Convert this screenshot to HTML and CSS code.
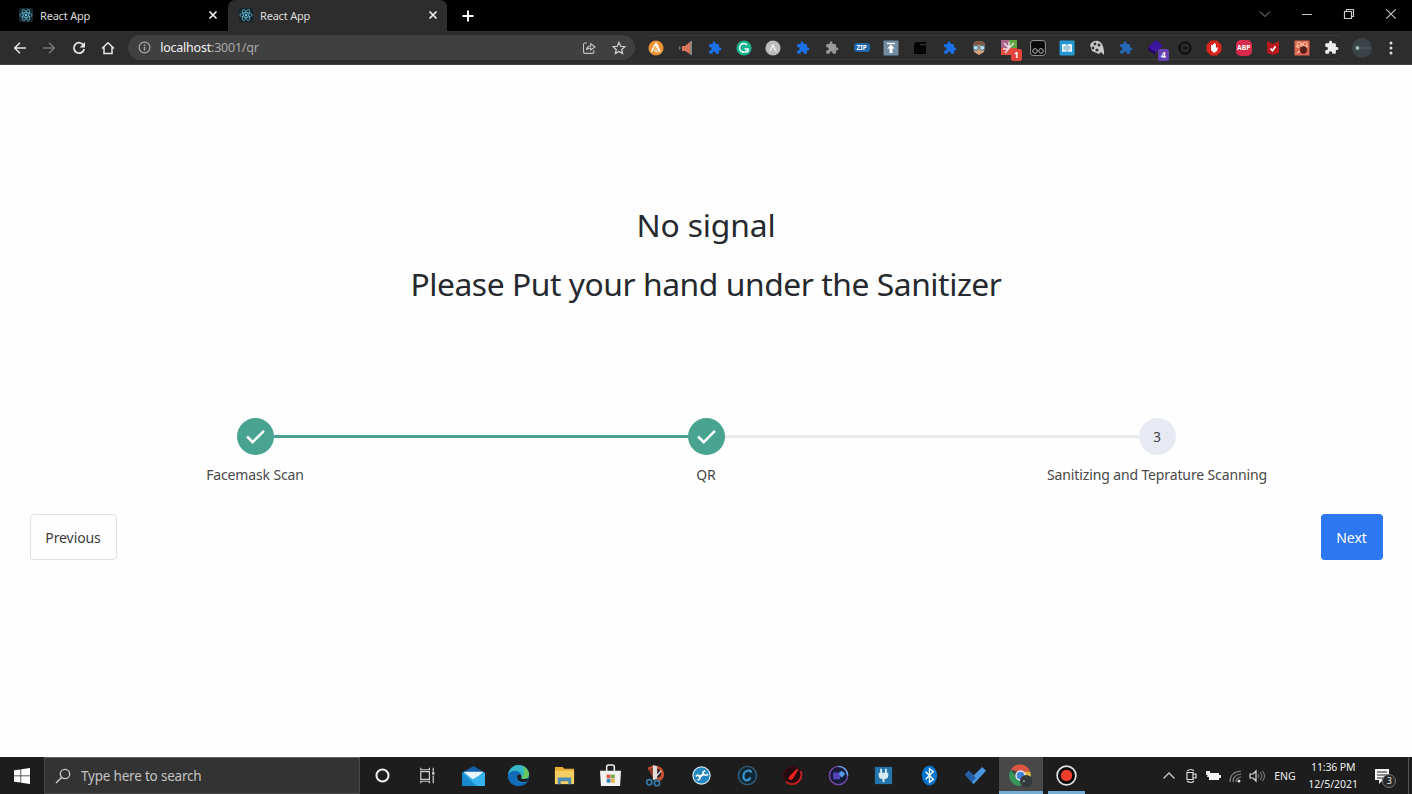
FILE: index.html
```html
<!DOCTYPE html>
<html lang="en">
<head>
<meta charset="utf-8">
<title>React App</title>
<link rel="stylesheet" href="styles.css">
</head>
<body>
<svg class="defs" width="0" height="0">
  <symbol id="react" viewBox="0 0 16 16"><rect width="16" height="16" rx="2" fill="#17262e"/><g fill="none" stroke="#56a5bd" stroke-width="1"><ellipse cx="8" cy="8" rx="7" ry="2.7"/><ellipse cx="8" cy="8" rx="7" ry="2.7" transform="rotate(60 8 8)"/><ellipse cx="8" cy="8" rx="7" ry="2.7" transform="rotate(120 8 8)"/></g><circle cx="8" cy="8" r="1.4" fill="#63bbd5"/></symbol>
  <symbol id="puzzle" viewBox="0 0 24 24"><path d="M20.5 11H19V7c0-1.1-.9-2-2-2h-4V3.5C13 2.12 11.88 1 10.5 1S8 2.12 8 3.5V5H4c-1.1 0-1.99.9-1.99 2v3.8H3.5c1.49 0 2.7 1.21 2.7 2.7s-1.21 2.7-2.7 2.7H2V20c0 1.1.9 2 2 2h3.8v-1.5c0-1.49 1.21-2.7 2.7-2.7s2.7 1.21 2.7 2.7V22H17c1.1 0 2-.9 2-2v-4h1.5c1.38 0 2.5-1.12 2.5-2.5S21.88 11 20.5 11z"/></symbol>
  <symbol id="close" viewBox="0 0 10 10"><path d="M1.5 1.5l7 7m0-7l-7 7" fill="none" stroke="currentColor" stroke-width="1.7"/></symbol>
</svg>

<header class="tabstrip">
  <div class="tab"><svg class="favicon"><use href="#react"/></svg><span class="tab-title">React App</span><svg class="tab-close"><use href="#close"/></svg></div>
  <div class="tab tab-active"><svg class="favicon"><use href="#react"/></svg><span class="tab-title">React App</span><svg class="tab-close"><use href="#close"/></svg></div>
  <svg class="new-tab" viewBox="0 0 12 12"><path d="M6 .5v11M.5 6h11" stroke="#fff" stroke-width="2"/></svg>
  <div class="window-controls">
    <svg viewBox="0 0 12 12"><path d="M1 3.5l5 5 5-5" fill="none" stroke="#999"/></svg>
    <svg viewBox="0 0 12 12"><path d="M1 6.5h10" stroke="#ccc"/></svg>
    <svg viewBox="0 0 12 12"><path d="M1.5 3.5h7v7h-7zM3.5 3V1.5h7v7H9" fill="none" stroke="#ccc" stroke-width="1.2"/></svg>
    <svg viewBox="0 0 12 12"><path d="M1.3 1.3l9.4 9.4m0-9.4l-9.4 9.4" stroke="#ccc" stroke-width="1.1"/></svg>
  </div>
</header>

<nav class="toolbar">
  <div class="nav-buttons">
    <svg viewBox="0 0 14 14"><path d="M13 7H2m5-5.3L1.7 7 7 12.3" fill="none" stroke="#e4e4e4" stroke-width="1.6"/></svg>
    <svg viewBox="0 0 14 14"><path d="M1 7h11M7 1.7L12.300 7 7 12.3" fill="none" stroke="#777" stroke-width="1.5"/></svg>
    <svg viewBox="0 0 14 14"><path d="M11.600 4.300A5.200 5.200 0 1 0 12.200 8" fill="none" stroke="#e8e8e8" stroke-width="1.7"/><path d="M13 1v5.400H7.600z" fill="#e8e8e8"/></svg>
    <svg viewBox="0 0 14 14"><path d="M1 7.500L7 1.800l6 5.700M3 6.200v6.300h8V6.200" fill="none" stroke="#e8e8e8" stroke-width="1.5"/></svg>
  </div>
  <div class="address">
    <svg class="info" viewBox="0 0 13 13"><circle cx="6.500" cy="6.500" r="5.400" fill="none" stroke="#aaa" stroke-width="1.200"/><path d="M6.500 5.800v3.700M6.500 3.300v1.400" stroke="#aaa" stroke-width="1.400"/></svg>
    <span class="url"><b>localhost</b>:3001/qr</span>
    <svg class="share" viewBox="0 0 14 14"><path d="M5 2H3.200Q1.500 2 1.500 3.700v7Q1.500 12.400 3.200 12.400h7q1.700 0 1.700-1.700V9.300M4.500 9c.3-3 2-4 4.200-4V2.700L13 6 8.700 9V7C6.800 7 5.500 7.500 4.500 9z" fill="none" stroke="#c4c4c4" stroke-width="1.100"/></svg>
    <svg class="star" viewBox="0 0 14 14"><path d="M7 1.400l1.700 3.900 4.200.4-3.200 2.800.9 4.100L7 10.400l-3.600 2.200.9-4.100L1.100 5.700l4.200-.4z" fill="none" stroke="#d6d6d6" stroke-width="1.200"/></svg>
  </div>
  <div class="extensions">
    <i><svg viewBox="0 0 16 16"><circle cx="8" cy="8" r="7.600" fill="#ed9135"/><path d="M2.500 11.500L7 3q1-1.500 2 0l4 8.500-2 .5-4-6-2.500 6z" fill="#fff1dd"/><path d="M7 7l4 6-5-1z" fill="#f7cf9b"/></svg></i>
    <i><svg viewBox="0 0 16 16"><path d="M13 2v12l-5-3H5V6h3z" fill="#dc7659"/><path d="M14 1v14" stroke="#e7d8d0"/><path d="M2 6l2 2-2 2z" fill="#648b9b"/></svg></i>
    <i><svg class="blue"><use href="#puzzle"/></svg></i>
    <i><svg viewBox="0 0 16 16"><circle cx="8" cy="8" r="7.600" fill="#1bb18d"/><path d="M11 5a4.300 4.300 0 1 0 1 4H8.500M10 12l2-.5V9" fill="none" stroke="#e8fff8" stroke-width="1.500"/></svg></i>
    <i><svg viewBox="0 0 16 16"><circle cx="8" cy="8" r="7.600" fill="#bbb"/><path d="M4 12l3.500-8h1L12 12l-2-1-2-4-2 4z" fill="#eee"/></svg></i>
    <i><svg class="blue"><use href="#puzzle"/></svg></i>
    <i><svg class="gray"><use href="#puzzle"/></svg></i>
    <i><span class="zip">ZIP</span></i>
    <i><svg viewBox="0 0 16 16"><rect x=".5" y=".5" width="15" height="15" rx="1" fill="#718da4"/><path d="M4 3.500h8" stroke="#fff" stroke-width="1.300"/><path d="M8 4.500l3.800 4H9.500V13h-3V8.500H4.200z" fill="#fff"/></svg></i>
    <i><svg viewBox="0 0 16 16"><path d="M2 4l2-2h10v12H2z" fill="#030303"/><path d="M8 4l3 1 3-1" stroke="#444" fill="none"/></svg></i>
    <i><svg class="blue"><use href="#puzzle"/></svg></i>
    <i><svg viewBox="0 0 16 16"><path d="M2 6q0-5 6-5t6 5l-1 6-5 3-5-3z" fill="#d6a47e"/><path d="M2 6q0-5 6-5t6 5q-6-2-12 0z" fill="#815640"/><g fill="#b6e1f3" stroke="#476d87"><circle cx="4.800" cy="7.800" r="2.500"/><circle cx="11.200" cy="7.800" r="2.500"/></g></svg></i>
    <i><svg viewBox="0 0 16 16"><path fill="#aa638a" d="M0 0h8v8H0z"/><path fill="#5da53d" d="M8 0h8v8H8z"/><path fill="#e24e42" d="M0 8h16v7H0z"/><path d="M8 2v6M3 3l5 5M2 9h6M8 8l5-5M8 8l-4 5" stroke="#ecdfe7" stroke-width="1.500"/></svg><em class="badge red">1</em></i>
    <i><svg viewBox="0 0 16 16"><rect x=".6" y=".6" width="14.800" height="14.800" rx="2.500" fill="#080808" stroke="#999"/><g fill="none" stroke="#bbb"><circle cx="5" cy="11" r="2.300"/><circle cx="11" cy="11" r="2.300"/></g></svg></i>
    <i><svg viewBox="0 0 16 16"><rect x=".5" y=".5" width="15" height="15" rx="1" fill="#2799d2"/><path d="M3 4.500q3-1 5 .5 2-1.500 5-.5V12q-3-1-5 0-2-1-5 0z" fill="#f0faff"/><path d="M8 5v7M4.500 7H7M9 7h2.500M4.500 9H7M9 9h2.500" stroke="#347ca5" stroke-width=".8"/></svg></i>
    <i><svg viewBox="0 0 16 16"><path d="M1 5q3-5 8-4t6 10v4l-3-3-2 2-7-3z" fill="#c9c9c9"/><g fill="#333"><circle cx="6" cy="4" r="1.400"/><circle cx="10" cy="5" r="1.500"/><circle cx="4" cy="8" r="1.400"/><circle cx="8" cy="10" r="1.600"/></g></svg></i>
    <i><svg class="blue dim"><use href="#puzzle"/></svg></i>
    <i><svg viewBox="0 0 16 16"><path d="M0 7l8-7 7 6-8 7z" fill="#3d16a0"/><path d="M0 7v3l7 5V12z" fill="#230765"/></svg><em class="badge violet">4</em></i>
    <i><svg viewBox="0 0 16 16"><circle cx="8" cy="8" r="5.700" fill="#292929" stroke="#080808" stroke-width="1.600"/><path d="M5.500 8h5" stroke="#111" stroke-width="1.500"/></svg></i>
    <i><svg viewBox="0 0 16 16"><path d="M5 .5h6L15.500 5v6L11 15.500H5L.5 11V5z" fill="#dc241d"/><path d="M5 5v5l3 3 3-2 1-4-2 1V4H9V3H8v1H7v1z" fill="#fff"/></svg></i>
    <i><span class="abp">ABP</span></i>
    <i><svg viewBox="0 0 16 16"><path d="M2 1l6 3 6-3v12l-6 2-6-2z" fill="#b9181d"/><path d="M5.500 8.500l2 2.200 3-4.500" stroke="#fff" stroke-width="1.700" fill="none"/></svg></i>
    <i><svg viewBox="0 0 16 16"><rect x=".5" y=".5" width="15" height="15" fill="#de6650"/><path d="M2 6l3 2M14 6l-3 2M3 13l3-2M8 3v4" stroke="#ffcaac" stroke-width="1.300"/><circle cx="5" cy="4" r="2" fill="none" stroke="#ffcaac"/><circle cx="11" cy="4" r="2" fill="none" stroke="#ffcaac"/><ellipse cx="9.500" cy="10" rx="3.500" ry="3.700" fill="#552019"/></svg></i>
    <i><svg class="white"><use href="#puzzle"/></svg></i>
  </div>
  <svg class="profile" viewBox="0 0 22 22"><circle cx="11" cy="11" r="10" fill="#3c4347"/><circle cx="6.500" cy="11" r="2" fill="#93bdb2"/><path d="M10 11h9" stroke="#596165"/></svg>
  <svg class="more" viewBox="0 0 4 14"><g fill="#ddd"><circle cx="2" cy="2" r="1.500"/><circle cx="2" cy="7" r="1.500"/><circle cx="2" cy="12" r="1.500"/></g></svg>
</nav>

<main class="page">
  <h1 class="signal">No signal</h1>
  <h1 class="instruction">Please Put your hand under the Sanitizer</h1>
  <div class="stepper">
    <div class="step done"><span class="dot"><svg viewBox="0 0 22 16"><path d="M2 8l6 6L20 2" fill="none" stroke="#fff" stroke-width="2.700"/></svg></span><span class="label">Facemask Scan</span></div>
    <div class="step done-last"><span class="dot"><svg viewBox="0 0 22 16"><path d="M2 8l6 6L20 2" fill="none" stroke="#fff" stroke-width="2.700"/></svg></span><span class="label">QR</span></div>
    <div class="step pending"><span class="dot">3</span><span class="label">Sanitizing and Teprature Scanning</span></div>
  </div>
  <div class="actions"><button class="btn previous">Previous</button><button class="btn next">Next</button></div>
</main>

<footer class="taskbar">
  <div class="start"><svg viewBox="0 0 16 16"><path d="M0 2.300L6.500 1.400V7.600H0zM7.200 1.300L16 0v7.600H7.200zM0 8.300h6.500v6.300L0 13.700zM7.200 8.300H16V16l-8.800-1.300z" fill="#fff"/></svg></div>
  <div class="search"><svg viewBox="0 0 16 16"><circle cx="10" cy="6" r="4.700" fill="none" stroke="#ccc" stroke-width="1.300"/><path d="M6.600 9.400L1 15" stroke="#ccc" stroke-width="1.400"/></svg><span>Type here to search</span></div>
  <div class="apps">
    <i><svg viewBox="0 0 24 24"><circle cx="12" cy="12" r="6.300" fill="none" stroke="#eee" stroke-width="2.100"/></svg></i>
    <i><svg viewBox="0 0 24 24"><path d="M5 8h9v8H5zM5 4v2h9V4M5 20v-2h9v2M18 4v4M18 12v8" fill="none" stroke="#ccc" stroke-width="1.300"/><path d="M16.800 8.500h2.500v2.500h-2.500z" fill="#ddd"/></svg></i>
    <i><svg viewBox="0 0 24 24"><path d="M0 9l12-7 12 7v4H0z" fill="#1260a8"/><path d="M0 9h24v14H0z" fill="#2ba3e2"/><path d="M1.500 8h21L12 17z" fill="#e8f7ff"/><path d="M0 9l15 14H0z" fill="#1989cf"/><path d="M24 9L9 17l7 6h8z" fill="#36b3ec"/></svg></i>
    <i><svg viewBox="0 0 24 24"><circle cx="12" cy="12" r="11" fill="#1683cb"/><path d="M1 11C3 3 8 1 12 1c7 0 11 5 11 10 0 4-4 5-8 4 1-4-1-8-6-8-3 0-6 1-8 4z" fill="#35b6c3"/><path d="M16 2c5 2 7 6 7 9 0 4-4 5-8 4 3-4 4-8 1-13z" fill="#65c95d"/><path d="M1 12c2-5 10-7 13-1-5-1-6 4-3 7 3 3 7 2 11 0-5 8-20 7-21-6z" fill="#126bb7"/><path d="M11 11.500c1-1 4-1 4 1 0 1-1 2 0 2.700 2 1 5 .6 7-.7 0 1-.4 2.500-1 3.500-5 2.500-13-.5-10-6.500z" fill="#1d1d1d"/></svg></i>
    <i><svg viewBox="0 0 24 24"><path d="M2 3h8l2 2h10v15H2z" fill="#e7ae35"/><path d="M2 7h20v14H2z" fill="#f4cd63"/><path d="M5 21v-7h14v7h-3v-3H8v3z" fill="#4c8db5"/></svg></i>
    <i><svg viewBox="0 0 24 24"><path d="M8 8V3Q8 1 10 1h4q2 0 2 2v5" fill="none" stroke="#eee" stroke-width="1.600"/><path d="M1 7h22l-1 16H2z" fill="#f2f2f2"/><path fill="#db5840" d="M8 11h4v4H8z"/><path fill="#79a94a" d="M12.500 11h4v4h-4z"/><path fill="#3987bd" d="M8 15.500h4v4H8z"/><path fill="#e7b342" d="M12.500 15.500h4v4h-4z"/></svg></i>
    <i><svg viewBox="0 0 24 24"><path d="M4 4Q12-1 18 4c6 6 2 14-4 14l-1-3q7-2 4-8-4-5-12 0z" fill="#c74e2c"/><path d="M5 6q5-4 9 0v8H9z" fill="#8c3923"/><path d="M10 2l3 1v12l-3 1zM18 7l-8 9" fill="#ddd" stroke="#ddd" stroke-width="1.400"/><g fill="none" stroke="#347baa" stroke-width="1.800"><circle cx="5.500" cy="19" r="2.700"/><circle cx="13.500" cy="20" r="2.700"/></g></svg></i>
    <i><svg viewBox="0 0 24 24"><circle cx="12" cy="12" r="9" fill="#2386c1" stroke="#dceef6" stroke-width="1.200"/><path d="M9 14l6-4" stroke="#fff" stroke-width="2.200"/><path d="M6 13l2-1.500 2.300 1.200.2 2.300L8 17M16 7l-2.500 1.500.5 2.500 2.500 1L19 10.500" fill="none" stroke="#fff" stroke-width="1.600"/></svg></i>
    <i><svg viewBox="0 0 24 24"><circle cx="12" cy="12" r="9.500" fill="#102735" stroke="#365e7b" stroke-width="1.500"/><path d="M16 9q-1-3-4-2c-5 1-6 10-1 10q3 0 4-3" fill="none" stroke="#3d91ca" stroke-width="2.300"/></svg></i>
    <i><svg viewBox="0 0 24 24"><circle cx="12" cy="12" r="9.500" fill="#240b0d" stroke="#3f1215"/><path d="M5 18.500q7 5 13 0 5-5 2.500-11" fill="none" stroke="#c62026" stroke-width="2"/><path d="M16.500 5l1.500 1-5 8.500q-2 3-4 2t0-4z" fill="#ed211f"/></svg></i>
    <i><svg viewBox="0 0 24 24"><circle cx="12" cy="12" r="9.500" fill="#171a38" stroke="#744cae" stroke-width="1.500"/><path d="M12 2.500a9.500 9.500 0 0 1 9.500 9.500" fill="none" stroke="#6aa6e0" stroke-width="1.500"/><path d="M6.500 9h7v7h-7z" fill="#4b50c5"/><path d="M13 8h2V6.500l4 4-4 4V13h-2z" fill="#559de8"/><path d="M6.500 12.500h7M10 9v7" stroke="#6732a4"/></svg></i>
    <i><svg viewBox="0 0 24 24"><path d="M3 3h18v18H3z" fill="#2575ad"/><path d="M7 9h10v3q0 4-5 4t-5-4z" fill="#d3eaf4"/><path d="M9.500 5v5M14.500 5v5M12 15v4" stroke="#d3eaf4" stroke-width="2"/></svg></i>
    <i><svg viewBox="0 0 24 24"><ellipse cx="12" cy="12" rx="8" ry="10.500" fill="#0874cc"/><path d="M8 8l8 8-4 3V5l4 3-8 8" fill="none" stroke="#fff" stroke-width="1.400"/></svg></i>
    <i><svg viewBox="0 0 24 24"><path d="M1 11l4-4 5 5 9-9 4 4-13 14z" fill="#4795dd"/><path d="M1 11l4-4 7.500 7.500L8 19z" fill="#235ca5"/></svg></i>
    <i class="chrome-app"><svg viewBox="0 0 24 24"><path d="M2 6a11 11 0 0 1 20 2H12z" fill="#dd5747"/><path d="M2 6A11 11 0 0 0 12 23l4-10H7z" fill="#36955a"/><path d="M12 8h10a11 11 0 0 1-9 15z" fill="#e3b941"/><circle cx="12" cy="12" r="4.700" fill="#4183d7" stroke="#e4e8ec" stroke-width="1.500"/><circle cx="18" cy="18" r="6.500" fill="#34393c"/><circle cx="15.500" cy="18" r="1.200" fill="#78938d"/></svg></i>
    <i class="record-app"><svg viewBox="0 0 24 24"><circle cx="12" cy="12" r="9.800" fill="#080808" stroke="#e1e1e1" stroke-width="1.800"/><circle cx="12" cy="12" r="6" fill="#ef3b2c"/></svg></i>
  </div>
  <div class="tray">
    <i><svg viewBox="0 0 16 16"><path d="M2.500 10.500L8 5l5.500 5.500" fill="none" stroke="#ccc" stroke-width="1.300"/></svg></i>
    <i><svg viewBox="0 0 16 16"><path d="M4 4.500h6v7H4zM10 6h3v4h-3M4 3q4-3 7 0M4 13q4 3 7 0" fill="none" stroke="#ddd" stroke-width="1.200"/></svg></i>
    <i><svg viewBox="0 0 16 16"><path d="M3 5h11v7H4V9H2z" fill="#f4f4f4"/><path d="M14 7h2v3h-2zM1 3h4v4H1z" fill="#eee"/></svg></i>
    <i><svg viewBox="0 0 16 16"><g fill="none" stroke="#888" stroke-width="1.200"><path d="M3 14Q3 4 14 3M6 14q0-7 8-8M9 14q0-4 5-5"/></g><circle cx="12" cy="13" r="1.500" fill="#ddd"/></svg></i>
    <i><svg viewBox="0 0 16 16"><path d="M1 6h3l3-3v10l-3-3H1z" fill="none" stroke="#ddd" stroke-width="1.200"/><path d="M9 6q2 2 0 4M11 4q4 4 0 8M13.500 3q4 5 0 10" fill="none" stroke="#888"/></svg></i>
  </div>
  <span class="lang">ENG</span>
  <div class="clock"><span>11:36 PM</span><span class="date">12/5/2021</span></div>
  <div class="notify"><svg viewBox="0 0 17 16"><path d="M1 1h14v11H9l-4 4v-4H1z" fill="#f4f4f4"/><path d="M3 4h10M3 7h10M3 10h6" stroke="#292929"/></svg><em>3</em></div>
  <span class="desktop-edge"></span>
</footer>
</body>
</html>
```
FILE: styles.css
```css
* { box-sizing: border-box; }
body { margin: 0; width: 1412px; height: 794px; overflow: hidden; display: flex; flex-direction: column; background: #fefefe; font-family: "Noto Sans", "Open Sans", sans-serif; color: #25292d; }
svg { display: block; flex: none; }
i, em { font-style: normal; }
.defs { position: absolute; }

.tabstrip { height: 31px; flex: none; display: flex; align-items: center; background: #000; }
.tab { height: 31px; display: flex; align-items: center; color: #ddd; font-size: 11px; width: 228px; padding: 0 10px 1px 19px; }
.tab-active { width: 219px; padding: 0 9px 1px 11px; background: #2d2d2d; border-radius: 7px 7px 0 0; }
.favicon { width: 14px; height: 14px; margin-right: 7px; }
.tab-title { flex: 1; letter-spacing: -0.2px; white-space: nowrap; }
.tab-close { width: 10px; height: 10px; color: #eee; }
.new-tab { width: 12px; height: 12px; margin-left: 15px; }
.window-controls { margin-left: auto; display: flex; gap: 30px; padding: 0 15px 3px 0; }
.window-controls svg { width: 12px; height: 12px; }

.toolbar { height: 34px; flex: none; display: flex; align-items: center; background: #2d2d2d; border-bottom: 1px solid #444; padding-left: 13px; }
.nav-buttons { display: flex; gap: 15.400px; }
.nav-buttons svg { width: 14px; height: 14px; }
.address { width: 507px; height: 25px; margin-left: 13px; border-radius: 13px; background: #404040; display: flex; align-items: center; padding: 0 9px 0 10px; }
.info { width: 13px; height: 13px; }
.url { flex: 1; margin-left: 9px; font-size: 12.500px; letter-spacing: -0.22px; color: #aaa; white-space: nowrap; }
.url b { color: #f2f2f2; font-weight: 400; }
.share { width: 14px; height: 14px; margin-right: 16px; }
.star { width: 14px; height: 14px; }
.extensions { width: 705.600px; height: 25px; flex: none; margin-left: 6px; border: solid #3a3a3a; border-width: 1px 0; border-radius: 13px; display: flex; }
.extensions i { width: 29.400px; flex: none; display: flex; align-items: center; justify-content: center; position: relative; }
.extensions svg { width: 16px; height: 16px; }
.extensions svg.blue, .extensions svg.gray { width: 14px; height: 14px; fill: #1b72e8; }
.extensions svg.gray { fill: #999; }
.extensions svg.dim { fill: #2468b8; }
.extensions svg.white { width: 15px; height: 15px; fill: #eee; }
.zip { width: 16px; height: 9px; border-radius: 3px; background: #1f66a9; color: #fff; font-size: 6.500px; font-weight: 700; line-height: 9px; text-align: center; }
.abp { width: 16px; height: 16px; border-radius: 5px; background: #d82a4c; color: #fff; font-size: 6.800px; font-weight: 700; line-height: 16px; text-align: center; }
.badge { position: absolute; left: 17px; top: 13px; width: 11px; height: 12px; border-radius: 2px; color: #fff; font-size: 8.500px; font-weight: 700; line-height: 12px; text-align: center; }
.red { background: #e2443d; }
.violet { background: #6541b5; }
.profile { width: 22px; height: 22px; margin-left: 4.500px; }
.more { width: 4px; height: 14px; margin-left: 16px; }

.page { flex: 1; display: flex; flex-direction: column; padding: 135px 29.500px 0; }
h1 { margin: 0; text-align: center; font-weight: 400; font-size: 31.800px; line-height: 50px; white-space: nowrap; letter-spacing: -0.15px; }
.instruction { margin-top: 9px; letter-spacing: -0.45px; }
.stepper { margin-top: 109px; display: grid; grid-template-columns: repeat(3, 451px); }
.step { display: flex; flex-direction: column; align-items: center; position: relative; }
.step.done::after, .step.done-last::after { content: ""; position: absolute; top: 17px; left: 244px; width: 414px; height: 3px; background: #48a491; }
.step.done-last::after { background: #e9e9ec; }
.dot { width: 37px; height: 37px; border-radius: 50%; background: #48a491; display: flex; align-items: center; justify-content: center; color: #444; font-size: 13.500px; }
.dot svg { width: 21px; height: 15px; }
.pending .dot { background: #e7e9f3; }
.label { margin-top: 9px; font-size: 14px; letter-spacing: -0.13px; line-height: 21px; color: #484848; white-space: nowrap; }
.actions { margin-top: 29px; display: flex; justify-content: space-between; }
.btn { height: 46px; padding: 0; font: 14px "Noto Sans", "Open Sans", sans-serif; letter-spacing: -0.1px; border-radius: 4px; }
.previous { width: 87px; border: 1px solid #e0e0e0; background: #fefefe; color: #3c3c3c; }
.next { width: 62px; border: 0; background: #2d77f2; color: #fff; }

.taskbar { height: 37px; flex: none; display: flex; align-items: center; background: #1d1d1d; color: #eee; }
.start { width: 44px; display: flex; justify-content: center; }
.start svg { width: 16px; height: 16px; }
.search { width: 316px; height: 37px; background: #333; border: 1px solid #494949; border-top-color: #666; display: flex; align-items: center; padding-left: 10px; font-size: 13.500px; letter-spacing: -0.2px; color: #c4c4c4; }
.search svg { width: 16px; height: 16px; margin-right: 10px; }
.apps { width: 730px; height: 37px; display: flex; margin-left: -0.800px; }
.apps i { width: 45.630px; flex: none; display: flex; align-items: center; justify-content: center; }
.apps svg { width: 23px; height: 23px; }
.chrome-app { background: linear-gradient(#75add5, #75add5) bottom / 44px 3px no-repeat, linear-gradient(#484848, #484848) center / 44px 37px no-repeat; }
.record-app { background: linear-gradient(#75add5, #75add5) bottom / 37px 3px no-repeat; }
.tray { margin-left: 72px; display: flex; gap: 6px; }
.tray svg { width: 16px; height: 16px; }
.lang { margin-left: 9px; width: 22px; font-size: 10.500px; }
.clock { width: 66px; margin-left: 4px; display: flex; flex-direction: column; align-items: center; font-size: 10.500px; line-height: 17px; letter-spacing: -0.15px; white-space: nowrap; }
.date { letter-spacing: 0; }
.notify { position: relative; margin-left: 8px; }
.notify svg { width: 17px; height: 16px; }
.notify em { position: absolute; left: 8px; top: 6px; width: 14px; height: 14px; border: 1px solid #777; border-radius: 50%; background: #292929; font-size: 9px; line-height: 12px; text-align: center; }
.desktop-edge { width: 1px; height: 37px; margin-left: auto; margin-right: 3px; background: #555; }
```
